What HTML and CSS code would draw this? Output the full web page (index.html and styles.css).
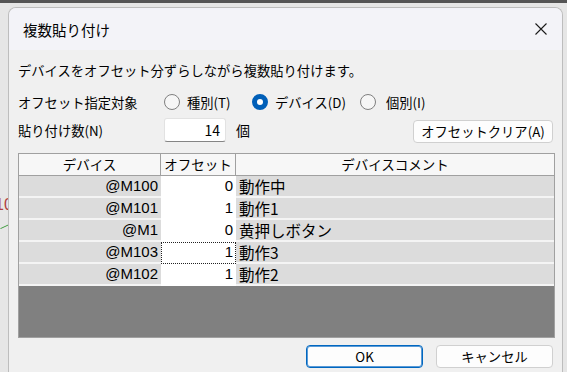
FILE: index.html
```html
<!DOCTYPE html>
<html lang="ja">
<head>
    <meta charset="UTF-8">
    <title>複数貼り付け</title>
    <link rel="stylesheet" href="styles.css">
</head>
<body>
    <div class="desk-bar"></div>
    <span class="desk-mark">10</span>
    <span class="desk-line"></span>
    <div class="dialog">
        <div class="titlebar">
            <span class="title">複数貼り付け</span>
            <svg class="close" width="12" height="12" viewBox="0 0 12 12">
                <path d="M0.5 0.5 L11.5 11.5 M11.5 0.5 L0.5 11.5" stroke="#1b1b1b" stroke-width="1.1" fill="none"/>
            </svg>
        </div>
        <div class="content">
            <div class="line intro">デバイスをオフセット分ずらしながら複数貼り付けます。</div>
            <div class="line target">
                <span class="label">オフセット指定対象</span>
                <span class="opt o1"><span class="radio"></span><span class="opt-text">種別(T)</span></span>
                <span class="opt o2"><span class="radio on"></span><span class="opt-text">デバイス(D)</span></span>
                <span class="opt o3"><span class="radio"></span><span class="opt-text">個別(I)</span></span>
            </div>
            <div class="line count">
                <span class="label">貼り付け数(N)</span>
                <span class="num">14</span>
                <span class="unit">個</span>
                <button class="btn clear">オフセットクリア(A)</button>
            </div>
            <div class="grid">
                <div class="head">デバイス</div>
                <div class="head">オフセット</div>
                <div class="head last">デバイスコメント</div>

                <div class="cell dev">@M100</div>
                <div class="cell off">0</div>
                <div class="cell cmt">動作中</div>

                <div class="cell dev">@M101</div>
                <div class="cell off">1</div>
                <div class="cell cmt">動作1</div>

                <div class="cell dev">@M1</div>
                <div class="cell off">0</div>
                <div class="cell cmt">黄押しボタン</div>

                <div class="cell dev">@M103</div>
                <div class="cell off focus">1</div>
                <div class="cell cmt">動作3</div>

                <div class="cell dev">@M102</div>
                <div class="cell off">1</div>
                <div class="cell cmt">動作2</div>

                <div class="empty"></div>
            </div>
            <div class="actions">
                <button class="btn ok">OK</button>
                <button class="btn">キャンセル</button>
            </div>
        </div>
    </div>
</body>
</html>
```

FILE: styles.css
```css
body {
    margin: 0;
    background: #e6e6e6;
    font-family: "Noto Sans CJK JP", "Liberation Sans", sans-serif;
    color: #000;
    height: 372px;
    overflow: hidden;
    position: relative;
}
.desk-bar {
    height: 3px;
    background: #555;
}
/* chart behind the dialog, only its edge shows */
.desk-mark {
    position: absolute;
    left: -5px;
    top: 196px;
    color: #b04040;
    font-family: "Liberation Sans", sans-serif;
    font-size: 16px;
}
.desk-line {
    position: absolute;
    left: 0;
    top: 226px;
    width: 10px;
    height: 1px;
    background: #3a9a3a;
    transform: rotate(-25deg);
}
.dialog {
    position: relative;
    margin: 4px 0 0 8px;
    width: 553px;
    height: 380px;
    border: 1px solid #bdbdbd;
    border-bottom: none;
    border-radius: 8px 8px 0 0;
    background: #f0f0f0;
    overflow: hidden;
}
.titlebar {
    height: 42px;
    background: #f3f3f8;
    display: flex;
    align-items: center;
    justify-content: space-between;
    padding: 0 15px 0 14px;
}
.title {
    font-size: 14.5px;
}
.content {
    padding: 8px 7px 0 9px;
    font-size: 13.3px;
}
.line {
    display: flex;
    align-items: center;
}
.intro {
    height: 24px;
}
.target {
    height: 26px;
    margin-top: 7px;
}
.count {
    height: 26px;
    margin-top: 2px;
}
.label {
    width: 146px;
    flex-shrink: 0;
}
.opt {
    display: flex;
    align-items: center;
    gap: 7px;
}
.o1 .opt-text {
    width: 53px;
    margin-right: 12px;
}
.o2 .opt-text {
    width: 78px;
    margin-right: 7px;
}
.o3 .opt-text {
    margin-left: 3px;
}
.radio {
    width: 16px;
    height: 16px;
    box-sizing: border-box;
    border: 1px solid #808080;
    border-radius: 50%;
    background: #f6f6f6;
}
.radio.on {
    border: 5px solid #005fb8;
    background: #fff;
}
.num {
    width: 62px;
    height: 24px;
    box-sizing: border-box;
    background: #fff;
    border: 1px solid #e2e2e2;
    border-bottom: 1px solid #858585;
    border-radius: 3px;
    text-align: right;
    padding-right: 5px;
    line-height: 22px;
    font-size: 14px;
}
.unit {
    margin-left: 10px;
    font-size: 14px;
}
.btn {
    font-family: inherit;
    font-size: 13.3px;
    color: #000;
    background: #fdfdfd;
    border: 1px solid #d0d0d0;
    border-radius: 4px;
    height: 23px;
    width: 117px;
    padding: 0;
}
.clear {
    margin-left: auto;
    margin-right: 2px;
    width: 140px;
    margin-top: 3px;
}
.grid {
    margin-top: 10px;
    border: 1px solid #a0a0a0;
    display: grid;
    grid-template-columns: 142px 75px 1fr;
    grid-template-rows: 22px repeat(5, 22px) 51px;
    font-size: 15px;
}
.head {
    background: #f7f7f7;
    border-right: 1px solid #a0a0a0;
    border-bottom: 1px solid #a0a0a0;
    text-align: center;
    font-size: 13.5px;
    line-height: 21px;
}
.head.last {
    border-right: none;
}
.cell {
    background: #dcdcdc;
    border-bottom: 2px solid #f4f4f4;
    line-height: 20px;
    white-space: nowrap;
}
.dev {
    text-align: right;
    padding-right: 3px;
    font-family: "Liberation Sans", "Noto Sans CJK JP", sans-serif;
}
.off {
    background: #fff;
    border-bottom-color: #fff;
    text-align: right;
    padding-right: 3px;
    font-family: "Liberation Sans", "Noto Sans CJK JP", sans-serif;
}
.focus {
    outline: 1px dotted #222;
    outline-offset: -1px;
}
.cmt {
    padding-left: 3px;
    font-size: 15.5px;
}
.empty {
    grid-column: 1 / 4;
    background: #808080;
}
.actions {
    display: flex;
    justify-content: flex-end;
    gap: 13px;
    margin-top: 7px;
    padding-right: 2px;
}
.ok {
    border-color: #0067c0;
    box-shadow: inset 0 0 0 1px #5a9ad6;
}
```
